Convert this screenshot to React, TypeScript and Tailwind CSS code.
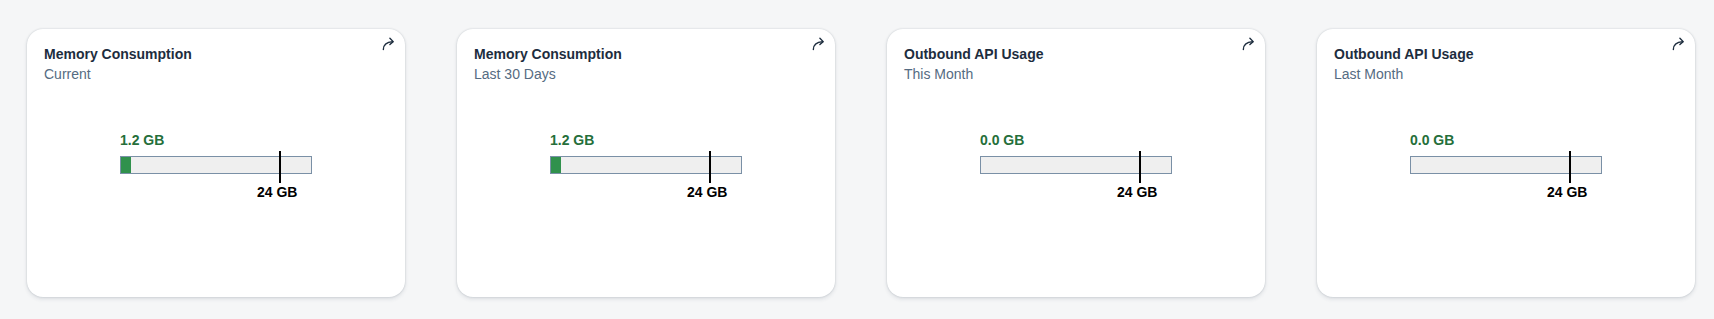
import React from 'react';

interface CardData {
  title: string;
  subtitle: string;
  value: number;
  max: number;
}

const cards: CardData[] = [
  { title: 'Memory Consumption', subtitle: 'Current', value: 1.2, max: 24 },
  { title: 'Memory Consumption', subtitle: 'Last 30 Days', value: 1.2, max: 24 },
  { title: 'Outbound API Usage', subtitle: 'This Month', value: 0.0, max: 24 },
  { title: 'Outbound API Usage', subtitle: 'Last Month', value: 0.0, max: 24 },
];

const ActionIcon = () => (
  <svg width="15" height="15" viewBox="0 0 16 16" fill="none" stroke="#1d2d3e" strokeWidth="1.5" strokeLinecap="round" strokeLinejoin="round">
    <path d="M2.5 14.5C2.5 9.5 6 6.5 12.5 6" />
    <polyline points="9.5 2.5 13 6 9.5 9" />
  </svg>
);

const UsageCard: React.FC<{ data: CardData }> = ({ data }) => {
  // inner width of the bar is 190px (192 minus the 1px borders)
  const fill = (data.value / data.max) * 190;

  return (
    <div className="relative w-[378px] h-[268px] bg-white rounded-[16px] shadow-[0_0_2px_rgba(34,53,72,0.2),0_2px_4px_rgba(34,53,72,0.12)] pt-[15px] pl-[17px] pr-4 flex flex-col">
      <div className="absolute top-[7px] right-[9px]">
        <ActionIcon />
      </div>

      {/* header */}
      <div>
        <h3 className="text-[14px] leading-5 font-bold text-[#1d2d3e]">{data.title}</h3>
        <p className="text-[14px] leading-5 text-[#556b82]">{data.subtitle}</p>
      </div>

      {/* bullet gauge */}
      <div className="mt-[48px] flex justify-center pr-[1px]">
        <div className="w-[192px]">
          <div className="text-[14px] leading-4 font-bold text-[#256f3a]">{data.value.toFixed(1)} GB</div>
          <div className="relative mt-2 h-[18px] border border-[#7a90a6] bg-[#efefef]">
            <div className="h-full bg-[#30914c]" style={{ width: fill }} />
            <div className="absolute left-[158px] -top-[6px] w-[2px] h-[32px] bg-black" />
          </div>
          <div className="mt-[10px] ml-[137px] text-[14px] leading-4 font-bold text-black">{data.max} GB</div>
        </div>
      </div>
    </div>
  );
};

export default function App() {
  return (
    <div className="w-[1714px] h-[319px] bg-[#f5f6f7] font-['Liberation_Sans',Arial,sans-serif]">
      <div className="flex gap-[52px] pt-[29px] pl-[27px]">
        {cards.map((c, i) => (
          <UsageCard key={i} data={c} />
        ))}
      </div>
    </div>
  );
}
